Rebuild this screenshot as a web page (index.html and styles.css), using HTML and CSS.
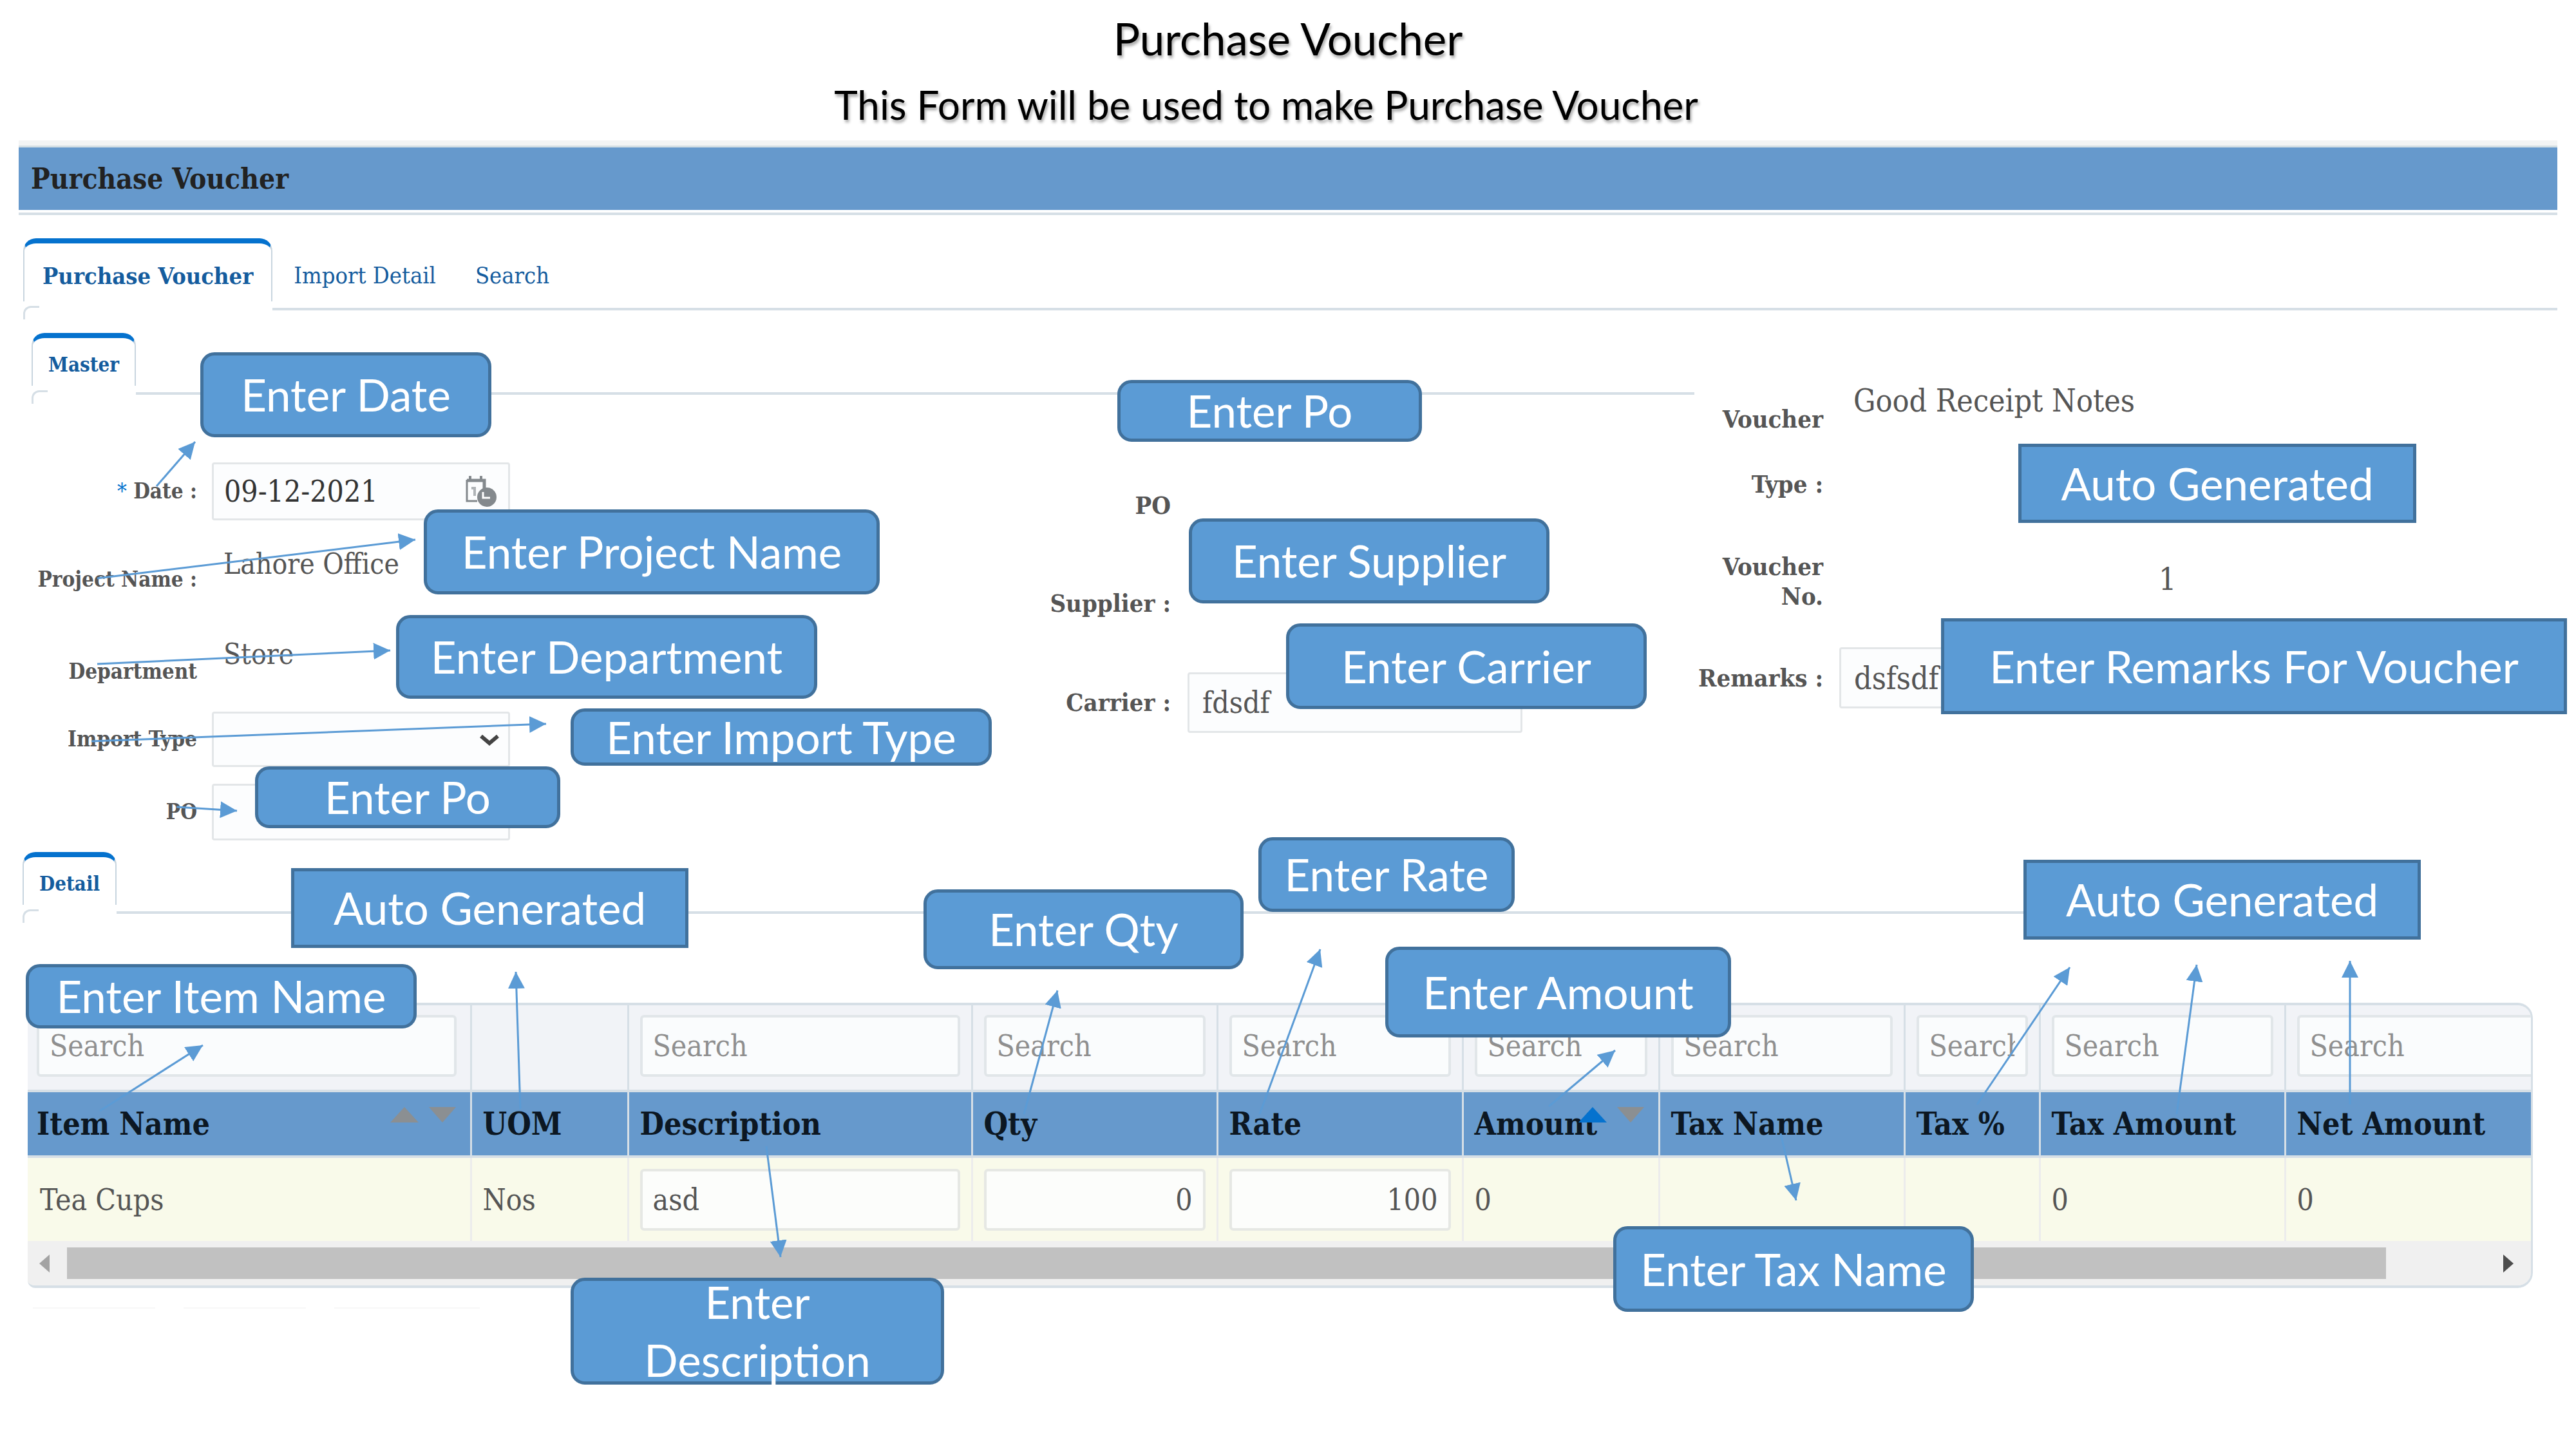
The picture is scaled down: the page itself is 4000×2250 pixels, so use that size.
FILE: index.html
```html
<!DOCTYPE html>
<html lang="en">
<head>
<meta charset="utf-8">
<title>Purchase Voucher</title>
<link rel="stylesheet" href="styles.css">
</head>
<body>
<div class="slide">
  <header class="intro">
    <h1>Purchase Voucher</h1>
    <p>This Form will be used to make Purchase Voucher</p>
  </header>

  <main class="app">
    <h2 class="title-bar">Purchase Voucher</h2>

    <nav class="tabs tabs-main">
      <a class="tab active" href="#voucher">Purchase Voucher</a>
      <a class="tab" href="#import">Import Detail</a>
      <a class="tab" href="#search">Search</a>
    </nav>

    <section class="master">
      <div class="master-left">
        <nav class="tabs tabs-sub tabs-master"><a class="tab active" href="#master">Master</a></nav>
        <div class="columns">
          <form class="fields fields-a">
            <div class="field f-date">
              <label for="date"><span class="req">*</span> Date :</label>
              <div class="date-box">
                <input id="date" type="text" value="09-12-2021">
                <svg class="cal" viewBox="0 0 50 48" aria-hidden="true">
                  <path d="M3 7h27v13" fill="none" stroke="#84898d" stroke-width="5"/>
                  <path d="M3 6v33h16" fill="none" stroke="#84898d" stroke-width="3"/>
                  <path d="M8 0v9M25 0v9" stroke="#84898d" stroke-width="4"/>
                  <path d="M10 19h5v12" fill="none" stroke="#b0b4b7" stroke-width="4"/>
                  <circle cx="34" cy="33" r="15" fill="#84898d"/>
                  <path d="M28 25v9h11" fill="none" stroke="#fff" stroke-width="3"/>
                </svg>
              </div>
            </div>
            <div class="field f-project"><label>Project Name :</label><output>Lahore Office</output></div>
            <div class="field f-dept"><label>Department</label><output>Store</output></div>
            <div class="field f-import">
              <label for="itype">Import Type</label>
              <div class="select-box">
                <select id="itype"><option></option></select>
                <svg class="chev" viewBox="0 0 34 20" aria-hidden="true"><path d="M4 4l13 11L30 4" fill="none" stroke="#444" stroke-width="6"/></svg>
              </div>
            </div>
            <div class="field f-po"><label for="po">PO</label><input id="po" type="text"></div>
          </form>
          <form class="fields fields-b">
            <div class="field f-po2"><label>PO</label></div>
            <div class="field f-supplier"><label>Supplier :</label></div>
            <div class="field f-carrier"><label for="carrier">Carrier :</label><input id="carrier" type="text" value="fdsdf"></div>
          </form>
        </div>
      </div>
      <form class="fields fields-c">
        <div class="field f-vtype"><label>Voucher Type :</label><output>Good Receipt Notes</output></div>
        <div class="field f-vno"><label>Voucher No.</label><output>1</output></div>
        <div class="field f-remarks"><label for="remarks">Remarks :</label><input id="remarks" type="text" value="dsfsdf"></div>
      </form>
    </section>

    <nav class="tabs tabs-sub tabs-detail"><a class="tab active" href="#detail">Detail</a></nav>

    <section class="grid">
      <table>
        <colgroup>
          <col class="c-item"><col class="c-uom"><col class="c-desc"><col class="c-num"><col class="c-num">
          <col class="c-amt"><col class="c-num"><col class="c-pct"><col class="c-num"><col class="c-net">
        </colgroup>
        <thead>
          <tr class="filters">
            <td><input type="text" placeholder="Search" aria-label="Item Name"></td>
            <td></td>
            <td><input type="text" placeholder="Search" aria-label="Description"></td>
            <td><input type="text" placeholder="Search" aria-label="Qty"></td>
            <td><input type="text" placeholder="Search" aria-label="Rate"></td>
            <td><input type="text" placeholder="Search" aria-label="Amount"></td>
            <td><input type="text" placeholder="Search" aria-label="Tax Name"></td>
            <td><input type="text" placeholder="Search" aria-label="Tax %"></td>
            <td><input type="text" placeholder="Search" aria-label="Tax Amount"></td>
            <td><input type="text" placeholder="Search" aria-label="Net Amount"></td>
          </tr>
          <tr class="heads">
            <th>Item Name<svg class="sort" viewBox="0 0 104 26" aria-hidden="true"><path d="M0 25L22 1l22 24z" fill="#8b8f92"/><path d="M60 1h42L81 25z" fill="#8b8f92"/></svg></th>
            <th>UOM</th><th>Description</th><th>Qty</th><th>Rate</th>
            <th>Amount<svg class="sort" viewBox="0 0 104 26" aria-hidden="true"><path d="M0 25L22 1l22 24z" fill="#0572ce"/><path d="M60 1h42L81 25z" fill="#8b8f92"/></svg></th>
            <th>Tax Name</th><th>Tax %</th><th>Tax Amount</th><th>Net Amount</th>
          </tr>
        </thead>
        <tbody>
          <tr class="row">
            <td>Tea Cups</td>
            <td>Nos</td>
            <td><input type="text" value="asd" aria-label="Description"></td>
            <td><input class="num" type="text" value="0" aria-label="Qty"></td>
            <td><input class="num" type="text" value="100" aria-label="Rate"></td>
            <td>0</td><td></td><td></td><td>0</td><td>0</td>
          </tr>
        </tbody>
      </table>
      <div class="scroll">
        <button type="button" aria-label="Scroll left"><svg viewBox="0 0 16 28"><path d="M16 0v28L0 14z" fill="#a3a3a3"/></svg></button>
        <div class="track"><div class="thumb"></div></div>
        <button type="button" aria-label="Scroll right"><svg viewBox="0 0 16 28"><path d="M0 0v28l16-14z" fill="#4d4d4d"/></svg></button>
      </div>
    </section>
    <div class="stubs"><i></i><i></i><i></i></div>
  </main>

  <svg class="arrows" viewBox="0 0 4000 2250" aria-hidden="true">
    <defs><marker id="tip" markerUnits="userSpaceOnUse" markerWidth="27" markerHeight="26" refX="26" refY="13" orient="auto"><path d="M0 0l26 13L0 26z" fill="#5b9bd5"/></marker></defs>
    <g stroke="#5b9bd5" stroke-width="3" fill="none">
      <path d="M243 755L303 686" marker-end="url(#tip)"/>
      <path d="M151 898L645 838" marker-end="url(#tip)"/>
      <path d="M151 1031L606 1010" marker-end="url(#tip)"/>
      <path d="M142 1151L848 1124" marker-end="url(#tip)"/>
      <path d="M274 1253L368 1259" marker-end="url(#tip)"/>
      <path d="M155 1725L315 1623" marker-end="url(#tip)"/>
      <path d="M808 1722L801 1509" marker-end="url(#tip)"/>
      <path d="M1190 1780L1212 1952" marker-end="url(#tip)"/>
      <path d="M1590 1730L1642 1538" marker-end="url(#tip)"/>
      <path d="M1956 1730L2050 1474" marker-end="url(#tip)"/>
      <path d="M2405 1718L2508 1631" marker-end="url(#tip)"/>
      <path d="M2765 1760L2789 1864" marker-end="url(#tip)"/>
      <path d="M3070 1715L3214 1502" marker-end="url(#tip)"/>
      <path d="M3380 1730L3411 1498" marker-end="url(#tip)"/>
      <path d="M3649 1715L3649 1492" marker-end="url(#tip)"/>
    </g>
  </svg>

  <aside class="notes">
    <div class="note n-date">Enter Date</div>
    <div class="note n-project">Enter Project Name</div>
    <div class="note n-dept">Enter Department</div>
    <div class="note n-import">Enter Import Type</div>
    <div class="note n-po">Enter Po</div>
    <div class="note n-po2">Enter Po</div>
    <div class="note n-supplier">Enter Supplier</div>
    <div class="note n-carrier">Enter Carrier</div>
    <div class="note square n-vtype">Auto Generated</div>
    <div class="note square n-remarks">Enter Remarks For Voucher</div>
    <div class="note square n-uom">Auto Generated</div>
    <div class="note n-item">Enter Item Name</div>
    <div class="note n-desc">Enter Description</div>
    <div class="note n-qty">Enter Qty</div>
    <div class="note n-rate">Enter Rate</div>
    <div class="note n-amount">Enter Amount</div>
    <div class="note square n-tax">Auto Generated</div>
    <div class="note n-taxname">Enter Tax Name</div>
  </aside>
</div>
</body>
</html>
```
FILE: styles.css
```css
* { box-sizing: border-box; }

body {
  margin: 0;
  background: #fff;
  color: #555;
  font-family: "DejaVu Serif Condensed", "DejaVu Serif", serif;
  font-size: 46px;
  line-height: 48px;
}

.slide { position: relative; overflow: hidden; padding-bottom: 210px; }

/* slide heading */
.intro { height: 218px; padding-top: 20px; text-align: center; font-family: Lato, sans-serif; color: #000; text-shadow: 2px 4px 4px rgba(0, 0, 0, .35); }
.intro h1 { margin: 0; font-size: 69px; font-weight: 400; line-height: 80px; }
.intro p { margin: 22px 68px 0 0; font-size: 62px; line-height: 80px; }

.app { margin: 0 29px; border-top: 8px solid #f3f4f4; }
.title-bar {
  margin: 0 0 37px;
  padding: 0 19px;
  border-top: 3px solid #d3dee3;
  background: #69c;
  color: #222;
  font-size: 44px;
  line-height: 97px;
  box-shadow: 0 4px 0 #fff, 0 8px 0 #d6dfe6;
}

/* tabs */
.tabs { display: flex; border-bottom: 4px solid #d6dfe6; }
.tab { position: relative; color: #145c9e; text-decoration: none; }
.tabs-main { height: 112px; margin: 44px 0 0 7px; font-size: 36px; line-height: 116px; }
.tabs-main .tab { margin-right: 61px; }
.tabs .tab.active { margin: 0 33px -4px 0; padding: 0 30px; background: #fff; font-weight: 700; }
.tab.active::before { content: ""; position: absolute; inset: 0 0 14px; border: 2px solid #c8d5df; border-top: 8px solid #0572ce; border-bottom: 0; border-radius: 20px 20px 0 0; }
.tab.active::after { content: ""; position: absolute; left: 0; bottom: -14px; width: 22px; height: 18px; border: solid #d6dfe6; border-width: 3px 0 0 3px; border-top-left-radius: 12px; }
.tabs-sub { height: 96px; font-size: 31px; line-height: 98px; }
.tabs-sub .tab.active { padding: 0 26px; }
.tabs-master { margin-left: 20px; }
.tabs-detail { width: 84%; margin: 18px 0 0 6px; }

/* master form */
.master { display: grid; grid-template-columns: 2602fr 1340fr; padding-top: 35px; }
.columns { display: grid; grid-template-columns: 763fr 1839fr; padding-top: 105px; }
.field { display: grid; align-items: center; column-gap: 23px; }
.field label { text-align: right; font-weight: 700; font-size: 38px; line-height: 46px; }
.field input, .field select {
  width: 100%;
  height: 100%;
  border: 3px solid #e3e6e8;
  border-radius: 4px;
  background: #fcfdfe;
  padding: 0 16px;
  font: inherit;
  color: #555;
}
.fields-a .field { grid-template-columns: 277px 1fr; }
.fields .field label { white-space: normal; }
.fields-a .field label { font-size: 33px; white-space: nowrap; }
.fields-a output { padding-left: 18px; font-size: 44px; }
.req { color: #0572ce; font-weight: 400; }
.f-date { height: 90px; }
.f-date input { color: #333; }
.date-box, .select-box { position: relative; height: 100%; }
.cal { position: absolute; right: 20px; top: 21px; width: 50px; height: 48px; }
.f-project { height: 184px; }
.f-project output { padding-bottom: 48px; }
.f-dept { height: 84px; }
.f-dept output { padding-bottom: 54px; }
.f-import { height: 86px; margin-top: 29px; }
.field select { appearance: none; }
.chev { position: absolute; right: 15px; top: 34px; width: 34px; height: 20px; }
.f-po { height: 88px; margin-top: 26px; }

.fields-b .field { grid-template-columns: 1026px 520px; column-gap: 26px; }
.fields-b input, .fields-c input { padding: 0 20px; }
.f-po2 { height: 134px; }
.f-supplier { height: 170px; }
.f-carrier { height: 94px; margin-top: 22px; }

.fields-c { font-size: 48px; }
.fields-c .field { grid-template-columns: 200px 1fr; column-gap: 25px; padding-right: 71px; }
.f-vtype { height: 290px; }
.f-vtype label { line-height: 101px; width: 190px; justify-self: end; margin-top: 78px; }
.f-vtype output { padding: 0 0 81px 22px; }
.f-vno { height: 150px; }
.f-vno label { width: 190px; justify-self: end; padding-top: 42px; }
.f-vno output { padding: 34px 0 0 496px; }
.f-remarks { height: 95px; margin-top: 48px; }

/* detail grid */
.grid { margin: 138px 38px 0 14px; border: 4px solid #d6dfe6; border-left: 0; border-right-width: 3px; border-radius: 0 24px 24px 12px; overflow: hidden; background: #f0f1f1; }
table { width: 100%; table-layout: fixed; border-collapse: collapse; }
.c-item { width: 688px; }
.c-uom { width: 244px; }
.c-desc { width: 534px; }
.c-num { width: 381px; }
.c-amt { width: 305px; }
.c-pct { width: 210px; }
.c-net { width: auto; }
td, th { position: relative; padding: 0 17px; text-align: left; white-space: nowrap; overflow: hidden; border-right: 3px solid #d6dfe6; }
td:last-child, th:last-child { border-right: 0; }
td:first-child, th:first-child { padding-left: 14px; }
table input {
  display: block;
  width: 100%;
  height: 96px;
  border: 4px solid #e1e6e9;
  border-radius: 6px;
  background: #fafcfd;
  padding: 0 16px;
  font: inherit;
  color: #555;
}
table input::placeholder { color: #8f8f8f; opacity: 1; }
.filters { height: 133px; background: #f1f3f7; }
.filters td { padding-bottom: 6px; }
.filters td:first-child { padding-right: 21px; }
.filters td:last-child { padding-right: 0; }
.filters td:last-child input { border-right: 0; border-radius: 6px 0 0 6px; }
.heads { height: 102px; background: #69c; color: #0c1722; border-top: 4px solid #d6dfe6; border-bottom: 4px solid #d6dfe6; }
.heads th { font-size: 48px; }
.sort { position: absolute; right: 20px; top: 22px; width: 104px; height: 26px; }
.row { height: 131px; background: #f9faea; }
.row td { border-right-color: #ececec; }
.row td:first-child { padding-left: 19px; }
.row input { background: #fcfdfb; border-color: #e6e8e4; }
.num { text-align: right; }

.scroll { display: flex; align-items: center; height: 69px; background: #f0f0f0; }
.scroll button { width: 61px; height: 60px; border: 0; padding: 0 9px 0 0; background: none; display: grid; place-items: center; }
.scroll svg { width: 16px; height: 28px; }
.track { flex: 1; }
.thumb { width: calc(100% - 164px); height: 49px; background: #c1c1c1; }

.stubs { display: flex; gap: 44px; padding: 30px 0 0 22px; }
.stubs i { width: 190px; height: 2px; background: #f7f7f7; }
.stubs i:last-child { width: 226px; }

/* annotations */
.arrows { position: absolute; left: 0; top: 0; width: 100%; }
.note {
  position: absolute;
  display: flex;
  align-items: center;
  justify-content: center;
  border: 5px solid #41719c;
  border-radius: 22px;
  background: #5b9bd5;
  color: #fff;
  font: 69px/90px Lato, sans-serif;
  text-align: center;
  white-space: nowrap;
}
.square { border-radius: 0; }
.n-date { left: 311px; top: 547px; width: 452px; height: 132px; }
.n-project { left: 658px; top: 791px; width: 708px; height: 132px; }
.n-dept { left: 615px; top: 955px; width: 654px; height: 130px; }
.n-import { left: 886px; top: 1100px; width: 654px; height: 89px; }
.n-po { left: 396px; top: 1190px; width: 474px; height: 96px; }
.n-po2 { left: 1735px; top: 590px; width: 473px; height: 96px; }
.n-supplier { left: 1846px; top: 805px; width: 560px; height: 132px; }
.n-carrier { left: 1997px; top: 968px; width: 560px; height: 133px; }
.n-vtype { left: 3134px; top: 689px; width: 618px; height: 123px; }
.n-remarks { left: 3014px; top: 960px; width: 972px; height: 149px; }
.n-uom { left: 452px; top: 1348px; width: 617px; height: 124px; }
.n-item { left: 40px; top: 1497px; width: 607px; height: 100px; }
.n-desc { left: 886px; top: 1984px; width: 580px; height: 166px; padding: 0 80px; white-space: normal; }
.n-qty { left: 1434px; top: 1381px; width: 497px; height: 124px; }
.n-rate { left: 1954px; top: 1300px; width: 398px; height: 116px; }
.n-amount { left: 2151px; top: 1470px; width: 537px; height: 141px; }
.n-tax { left: 3142px; top: 1335px; width: 617px; height: 124px; }
.n-taxname { left: 2505px; top: 1904px; width: 560px; height: 133px; }
```
